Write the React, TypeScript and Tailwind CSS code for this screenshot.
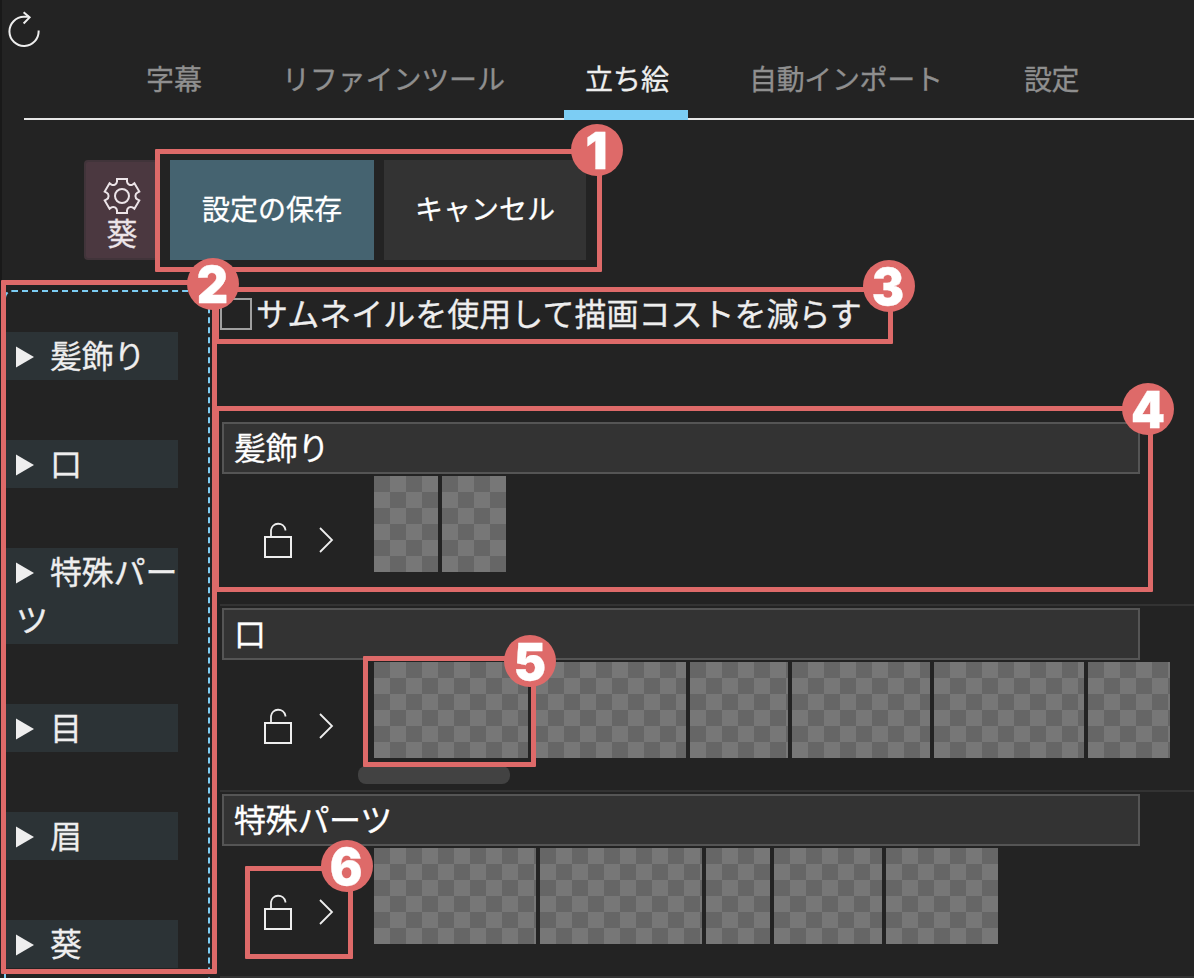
import React from "react";

const TABS = [
  { label: "字幕", place: "ml-[102px]" },
  { label: "リファインツール", place: "ml-[40px] w-[264px] tracking-[-0.15px]" },
  { label: "立ち絵", place: "ml-[38px] w-[124px]", active: true },
  { label: "自動インポート", place: "ml-[41px] w-[236px] tracking-[-0.35px]" },
  { label: "設定", place: "ml-[39px] tracking-[-0.5px]" },
];

const GROUPS = ["髪飾り", "口", "特殊パーツ", "目", "眉", "葵"];

const SECTIONS: { name: string; tiles: number[]; scroll?: boolean }[] = [
  { name: "髪飾り", tiles: [64, 64] },
  { name: "口", tiles: [154, 154, 98, 138, 150, 82], scroll: true },
  { name: "特殊パーツ", tiles: [162, 162, 64, 108, 112] },
];

const MARKS = [
  { n: 1, box: "left-[155px] top-[149px] w-[447px] h-[122.5px]", dot: "left-[571px] top-[124px]" },
  { n: 3, box: "left-[213.5px] top-[287px] w-[679.5px] h-[56.5px]", dot: "left-[863px] top-[260px]" },
  { n: 4, box: "left-[213.5px] top-[406px] w-[939.5px] h-[185.5px]", dot: "left-[1122px] top-[383px]" },
  { n: 2, box: "left-[0.5px] top-[280px] w-[216.5px] h-[693.5px]", dot: "left-[187px] top-[258px]" },
  { n: 5, box: "left-[363px] top-[656px] w-[173px] h-[111px]", dot: "left-[504px] top-[635px]" },
  { n: 6, box: "left-[245px] top-[866px] w-[107.5px] h-[93px]", dot: "left-[321px] top-[840px]" },
];

function ReloadIcon() {
  return (
    <svg width="40" height="48" viewBox="0 0 40 48" fill="none" stroke="#eeeeee" strokeWidth="2">
      <path d="M38.6 30.5A14.6 14.6 0 1 1 24 16.8H29" />
      <path d="M23.6 12.3L29.6 17.4L23.6 23.5" />
    </svg>
  );
}

function GearIcon() {
  return (
    <svg width="38" height="38" viewBox="0 0 38 38" fill="none" stroke="#ece4e8" strokeWidth="2">
      <circle cx="19" cy="19" r="7" />
      <path d="M14 2H24V4.6A3.9 3.9 0 0 0 29.6 7.6L31.4 6.3L36.3 14.6L34.4 15.6A3.9 3.9 0 0 0 34.4 22.4L36.3 23.4L31.4 31.7L29.6 30.4A3.9 3.9 0 0 0 24 33.4V36H14V33.4A3.9 3.9 0 0 0 8.4 30.4L6.6 31.7L1.7 23.4L3.6 22.4A3.9 3.9 0 0 0 3.6 15.6L1.7 14.6L6.6 6.3L8.4 7.6A3.9 3.9 0 0 0 14 4.6Z" />
    </svg>
  );
}

function LockIcon() {
  return (
    <svg width="28" height="37" viewBox="0 0 28 37" fill="none" stroke="#eeeeee" strokeWidth="2">
      <path d="M1 16H27V36H1Z" />
      <path d="M7 16V9.2A7.3 7.3 0 0 1 21.4 8.6V9.6" strokeWidth="1.8" />
    </svg>
  );
}

function ChevronIcon() {
  return (
    <svg width="15" height="27" viewBox="0 0 15 27" fill="none" stroke="#eeeeee" strokeWidth="1.8">
      <path d="M1 1L13 13L1 25" />
    </svg>
  );
}

export default function App() {
  return (
    <div className="relative flex h-[978px] w-[1194px] flex-col overflow-hidden bg-[#232323] font-['Noto_Sans_CJK_JP',sans-serif] text-[#eeeeee] [-webkit-text-stroke:0.3px]">
      <header className="flex h-[120px] flex-col border-l-2 border-[#191919]">
        <div className="-ml-0.5 h-12">
          <ReloadIcon />
        </div>
        <nav className="ml-[22px] flex h-[72px] border-b-2 border-[#e6e6e6] text-[28px] leading-[60px]">
          {TABS.map((t) => (
            <div
              key={t.label}
              className={`h-[72px] shrink-0 whitespace-nowrap ${t.place} ${t.active ? "border-b-10 border-[#7ccdf4] pl-[21px] text-[#eeeeee]" : "px-5 text-[#8f8f8f]"}`}
            >
              {t.label}
            </div>
          ))}
        </nav>
      </header>

      <div className="flex h-[170px] items-start border-l-2 border-[#191919] pt-10 pl-[82px]">
        <div className="flex h-[100px] w-[76px] shrink-0 flex-col items-center rounded-[4px] border-2 border-[#41343a] bg-[#4b3840] pt-[15px] text-[31px] leading-[34px] text-[#ece4e8]">
          <GearIcon />
          葵
        </div>
        <button className="ml-[10px] h-[100px] w-[204px] bg-[#456370] pb-1 text-[28px] text-white">設定の保存</button>
        <button className="ml-[10px] h-[100px] w-[202px] bg-[#333333] pb-1 text-[28px] text-white">キャンセル</button>
      </div>

      <div className="flex h-[688px] text-[32px]">
        <aside className="ml-1 flex h-[720px] w-[206px] shrink-0 flex-col gap-[60px] rounded-[8px] border-2 border-dashed border-[#7ccdf4] pt-10 pr-[30px]">
          {GROUPS.map((g) => (
            <div key={g} className="bg-[#2c3336] pl-[10px]">
              <div className="-mr-2 -translate-y-[2px] leading-[48px] tracking-[-0.2px]">
                <svg className="mr-4 inline-block align-[0px]" width="18" height="22" viewBox="0 0 18 22">
                  <path d="M0 0.5L18 11L0 21.5Z" fill="#eeeeee" />
                </svg>
                {g}
              </div>
            </div>
          ))}
        </aside>

        <main className="ml-[10px] w-[974px] shrink-0">
          <label className="flex h-[130px] items-start pt-2">
            <span className="h-8 w-8 shrink-0 border-2 border-[#a0a0a0]" />
            <span className="ml-1 leading-7 whitespace-nowrap">サムネイルを使用して描画コストを減らす</span>
          </label>
          {SECTIONS.map((s) => (
            <section key={s.name} className="h-[186px] border-b-2 border-[#333333] pt-[2px] pl-[2px]">
              <div className="h-[52px] w-[918px] border-2 border-[#555555] bg-[#333333] pl-[10px] leading-[44px] tracking-[-0.3px] text-white">
                {s.name}
              </div>
              <div className="flex pt-[2px]">
                <div className="flex w-[152px] shrink-0 items-start pt-[45px] pl-[42px]">
                  <LockIcon />
                  <div className="mt-[6px] ml-[27px]"><ChevronIcon /></div>
                </div>
                <div className="flex gap-1">
                  {s.tiles.map((w, i) => (
                    <div
                      key={i}
                      className="h-24 shrink-0 bg-[repeating-conic-gradient(#777777_0_25%,#666666_0_50%)] bg-[length:32px_32px]"
                      style={{ width: w }}
                    />
                  ))}
                </div>
              </div>
              {s.scroll && <div className="mt-2 ml-[136px] h-[18px] w-[152px] rounded-[8px] bg-[#424242]" />}
            </section>
          ))}
        </main>
      </div>

      {MARKS.map((m) => (
        <div key={m.n} className={`absolute rounded-[1px] border-[5.5px] border-[#de6a69] ${m.box}`} />
      ))}
      {MARKS.map((m) => (
        <div
          key={m.n}
          className={`absolute flex h-[52px] w-[52px] items-center justify-center rounded-full bg-[#de6a69] pt-px pr-px font-['Inter',sans-serif] text-[51px] leading-none font-black text-white ${m.dot}`}
        >
          <span className="scale-x-95">{m.n}</span>
        </div>
      ))}
    </div>
  );
}
